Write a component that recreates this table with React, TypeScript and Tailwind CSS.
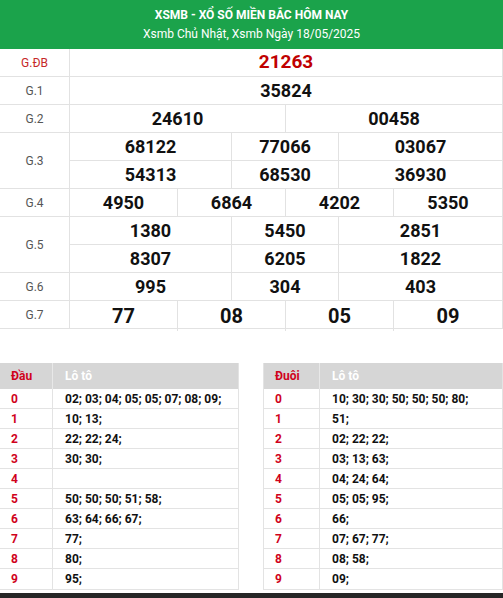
import React from "react";

const font = { fontFamily: "Roboto, 'Liberation Sans', sans-serif" };

const Label = ({ text, red = false, bottom = false }: { text: string; red?: boolean; bottom?: boolean }) => (
  <div
    className={`w-[70px] shrink-0 flex items-center justify-center border-r border-[#e2e2e2] text-[12px] ${
      red ? "text-[#c62828]" : "text-[#555]"
    } ${bottom ? "border-b" : ""}`}
  >
    {text}
  </div>
);

const Row = ({ children }: { children: React.ReactNode }) => (
  <div className="flex h-[28px] border-b border-[#e2e2e2]">{children}</div>
);

const Num = ({ v, size = "text-[18px]", border = true }: { v: string; size?: string; border?: boolean }) => (
  <div
    className={`flex items-center justify-center font-bold text-[#111] ${size} ${
      border ? "border-r border-[#e2e2e2]" : ""
    }`}
  >
    {v}
  </div>
);

const Three = ({ a, b, c }: { a: string; b: string; c: string }) => (
  <div className="grid grid-cols-[162px_107px_1fr] h-[28px] border-b border-[#e2e2e2]">
    <Num v={a} />
    <Num v={b} />
    <Num v={c} border={false} />
  </div>
);

const Four = ({ vals, size }: { vals: string[]; size: string }) => (
  <div className="grid flex-1 grid-cols-4">
    {vals.map((v, i) => (
      <Num key={i} v={v} size={size} border={i < 3} />
    ))}
  </div>
);

const dau = [
  "02; 03; 04; 05; 05; 07; 08; 09;",
  "10; 13;",
  "22; 22; 24;",
  "30; 30;",
  "",
  "50; 50; 50; 51; 58;",
  "63; 64; 66; 67;",
  "77;",
  "80;",
  "95;",
];

const duoi = [
  "10; 30; 30; 50; 50; 50; 80;",
  "51;",
  "02; 22; 22;",
  "03; 13; 63;",
  "04; 24; 64;",
  "05; 05; 95;",
  "66;",
  "07; 67; 77;",
  "08; 58;",
  "09;",
];

const LotoTable = ({ title, rows, first }: { title: string; rows: string[]; first: string }) => (
  <div className="w-[239px] border-r border-b border-[#e3e3e3] text-[12px] font-bold">
    <div className="flex h-[26px] bg-[#d6d6d6]">
      <div className={`${first} flex items-center pl-[11px] text-[#d0021b] border-r border-[#e8e8e8]`}>{title}</div>
      <div className="flex items-center pl-[12px] text-white">Lô tô</div>
    </div>
    {rows.map((r, i) => (
      <div key={i} className={`flex h-[20px] ${i < rows.length - 1 ? "border-b border-[#e3e3e3]" : ""}`}>
        <div className={`${first} flex items-center pl-[11px] text-[#d0021b] border-r border-[#e3e3e3]`}>{i}</div>
        <div className="flex items-center pl-[12px] text-[#111]">{r}</div>
      </div>
    ))}
  </div>
);

export default function App() {
  return (
    <div className="w-[503px] h-[598px] overflow-hidden bg-white" style={font}>
      <div className="h-[49px] bg-[#1ba34b] flex flex-col items-center justify-center text-white">
        <div className="text-[12px] font-bold leading-[16px]">XSMB - XỔ SỐ MIỀN BẮC HÔM NAY</div>
        <div className="text-[12px] leading-[18px] mt-[2px]">Xsmb Chủ Nhật, Xsmb Ngày 18/05/2025</div>
      </div>

      <div className="border-r border-[#e2e2e2]">
        <Row>
          <Label text="G.ĐB" red />
          <div className="flex-1 flex items-center justify-center font-bold text-[19px] text-[#c00000]">21263</div>
        </Row>
        <Row>
          <Label text="G.1" />
          <div className="flex-1 flex items-center justify-center font-bold text-[18px] text-[#111]">35824</div>
        </Row>
        <Row>
          <Label text="G.2" />
          <div className="grid flex-1 grid-cols-2">
            <Num v="24610" />
            <Num v="00458" border={false} />
          </div>
        </Row>
        <div className="flex h-[56px]">
          <Label text="G.3" bottom />
          <div className="flex-1">
            <Three a="68122" b="77066" c="03067" />
            <Three a="54313" b="68530" c="36930" />
          </div>
        </div>
        <Row>
          <Label text="G.4" />
          <Four vals={["4950", "6864", "4202", "5350"]} size="text-[18px]" />
        </Row>
        <div className="flex h-[56px]">
          <Label text="G.5" bottom />
          <div className="flex-1">
            <Three a="1380" b="5450" c="2851" />
            <Three a="8307" b="6205" c="1822" />
          </div>
        </div>
        <div className="flex h-[28px]">
          <Label text="G.6" bottom />
          <div className="flex-1">
            <Three a="995" b="304" c="403" />
          </div>
        </div>
        <Row>
          <Label text="G.7" />
          <Four vals={["77", "08", "05", "09"]} size="text-[20px]" />
        </Row>
      </div>

      <div className="flex mt-[34px]">
        <LotoTable title="Đầu" rows={dau} first="w-[53px]" />
        <div className="ml-[24px] border-l border-[#e3e3e3]">
          <LotoTable title="Đuôi" rows={duoi} first="w-[56px]" />
        </div>
      </div>

      <div className="mt-[3px] h-[20px] bg-[#262626]" />
    </div>
  );
}
